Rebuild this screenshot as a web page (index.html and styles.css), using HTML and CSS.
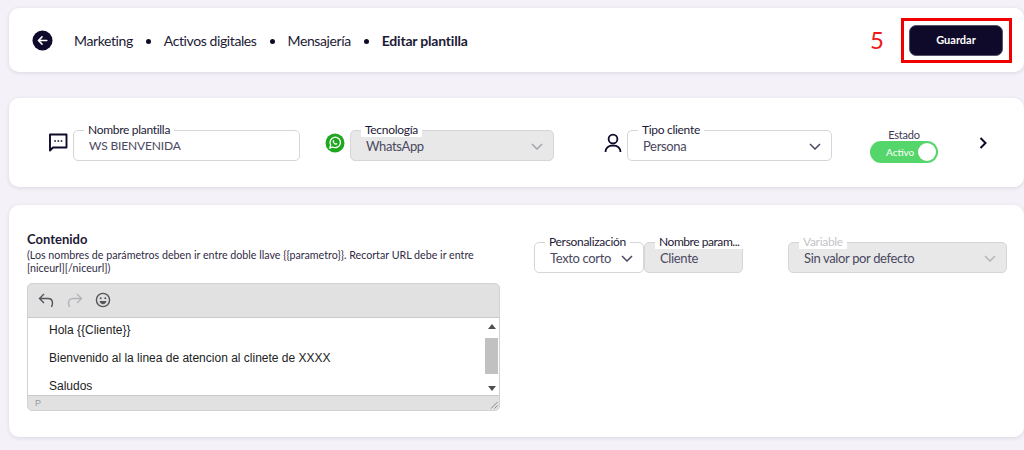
FILE: index.html
```html
<!DOCTYPE html>
<html lang="es">
<head>
<meta charset="utf-8">
<title>Editar plantilla</title>
<link rel="stylesheet" href="styles.css">
</head>
<body>
<main class="page">
  <header class="card topbar">
    <svg class="back" viewBox="0 0 22 22" width="21" height="21"><circle cx="11" cy="11" r="10.5" fill="#0f0a2a"/><path d="M15.5 11H7M10.5 7.2 6.700 11l3.800 3.800" fill="none" stroke="#fff" stroke-width="1.600" stroke-linecap="round" stroke-linejoin="round"/></svg>
    <nav class="crumbs">
      <span>Marketing</span><i></i><span>Activos digitales</span><i></i><span>Mensajería</span><i></i><strong>Editar plantilla</strong>
    </nav>
    <span class="step">5</span>
    <div class="mark"><button class="save">Guardar</button></div>
  </header>

  <section class="card meta">
    <svg class="ic-chat" viewBox="0 0 20 20" width="20" height="20"><path d="M2 2.500h16.500v13H5L2 18.500z" fill="none" stroke="#0f0a2a" stroke-width="1.900" stroke-linejoin="round"/><path d="M6.300 9h1.600M9.500 9h1.600M12.700 9h1.600" stroke="#0f0a2a" stroke-width="1.700"/></svg>
    <div class="field f-name"><span class="lab">Nombre plantilla</span><span class="val tight">WS BIENVENIDA</span></div>
    <svg class="ic-wa" viewBox="0 0 20 20" width="20" height="20"><circle cx="10" cy="10" r="9.500" fill="#1fa81f"/><path d="M4.800 15.200l.9-3.200a5.200 5.200 0 1 1 2 2z" fill="none" stroke="#fff" stroke-width="1.300" stroke-linejoin="round"/><path d="M8 7.300c-.7.800-.4 1.900.5 3s2 1.800 3 1.500c.7-.3.900-.9.700-1.200l-1.100-.6-.6.500c-.6-.2-1.200-.9-1.500-1.500l.4-.6-.5-1.100c-.3-.2-.6-.2-.9 0z" fill="#fff"/></svg>
    <div class="field f-tec off"><span class="lab">Tecnología</span><span class="val">WhatsApp</span><svg class="chev" viewBox="0 0 12 7" width="12" height="7"><path d="M1 1l5 5 5-5" fill="none" stroke="#a5a5ab" stroke-width="1.500"/></svg></div>
    <svg class="ic-user" viewBox="0 0 18 20" width="18" height="20"><circle cx="9" cy="6" r="4.400" fill="none" stroke="#0f0a2a" stroke-width="1.800"/><path d="M1.500 19c0-4 3-6.500 7.500-6.500s7.500 2.500 7.500 6.500" fill="none" stroke="#0f0a2a" stroke-width="1.800"/></svg>
    <div class="field f-tipo"><span class="lab">Tipo cliente</span><span class="val">Persona</span><svg class="chev" viewBox="0 0 12 7" width="12" height="7"><path d="M1 1l5 5 5-5" fill="none" stroke="#4b4860" stroke-width="1.500"/></svg></div>
    <div class="state">
      <span class="state-lab">Estado</span>
      <div class="toggle"><span>Activo</span><b></b></div>
    </div>
    <svg class="next" viewBox="0 0 8 12" width="8" height="12"><path d="M1.500 1l5 5-5 5" fill="none" stroke="#0f0a2a" stroke-width="2"/></svg>
  </section>

  <section class="card content">
    <div class="left">
      <h2>Contenido</h2>
      <p>(Los nombres de parámetros deben ir entre doble llave {{parametro}}. Recortar URL debe ir entre [niceurl][/niceurl])</p>
      <div class="editor">
        <div class="tools">
          <svg viewBox="0 0 18 18" width="18" height="18"><path d="M7 3 2.500 7.500 7 12M3 7.500h8c3 0 4.500 2 4.500 4.500 0 1.500-.5 3-1 4" fill="none" stroke="#55555a" stroke-width="1.400"/></svg>
          <svg viewBox="0 0 18 18" width="18" height="18"><path d="M11 3l4.500 4.500L11 12M15 7.500H7C4 7.500 2.500 9.500 2.500 12c0 1.500.5 3 1 4" fill="none" stroke="#b4b4b8" stroke-width="1.400"/></svg>
          <svg viewBox="0 0 18 18" width="18" height="18"><circle cx="9" cy="9" r="6.600" fill="none" stroke="#55555a" stroke-width="1.400"/><circle cx="6.700" cy="7.300" r="1" fill="#55555a"/><circle cx="11.300" cy="7.300" r="1" fill="#55555a"/><path d="M5.500 10h7c-.3 2-1.700 3.200-3.500 3.200S5.800 12 5.500 10z" fill="#55555a"/></svg>
        </div>
        <div class="body">
          <div class="text">
            <p>Hola {{Cliente}}</p>
            <p>Bienvenido al la linea de atencion al clinete de XXXX</p>
            <p>Saludos</p>
          </div>
          <div class="scroll">
            <svg viewBox="0 0 8 5" width="8" height="5"><path d="M0 5l4-5 4 5z" fill="#505050"/></svg>
            <div class="thumb"></div>
            <svg viewBox="0 0 8 5" width="8" height="5"><path d="M0 0l4 5 4-5z" fill="#505050"/></svg>
          </div>
        </div>
        <div class="status"><span>P</span><svg viewBox="0 0 8 8" width="8" height="8"><path d="M7.500 1 1 7.500M7.500 4.500 4.500 7.500" stroke="#8a8a8a" stroke-width="1"/></svg></div>
      </div>
    </div>
    <div class="params">
      <div class="field f-per"><span class="lab">Personalización</span><span class="val">Texto corto</span><svg class="chev" viewBox="0 0 12 7" width="12" height="7"><path d="M1 1l5 5 5-5" fill="none" stroke="#4b4860" stroke-width="1.500"/></svg></div>
      <div class="field f-par off"><span class="lab nar">Nombre param...</span><span class="val">Cliente</span></div>
      <div class="field f-var off"><span class="lab dim">Variable</span><span class="val">Sin valor por defecto</span><svg class="chev" viewBox="0 0 12 7" width="12" height="7"><path d="M1 1l5 5 5-5" fill="none" stroke="#b5b5ba" stroke-width="1.500"/></svg></div>
    </div>
  </section>
</main>
</body>
</html>
```

FILE: styles.css
```css
* { box-sizing: border-box; }
html, body { margin: 0; height: 450px; overflow: hidden; }
body { background: #f4f1f8; font-family: "Lato", "Open Sans", sans-serif; color: #0f0a2a; }
.page { display: flex; flex-direction: column; padding: 8px 0 0 9px; }
.card { background: #fff; border-radius: 10px; box-shadow: 0 1px 4px rgba(40, 30, 70, .12); }

.topbar { height: 64px; display: flex; align-items: center; padding: 0 12px 0 23px; margin-bottom: 26px; }
.back { flex: none; }
.crumbs { display: flex; align-items: center; margin-left: 21px; font-size: 14px; letter-spacing: -.4px; color: #1d1a36; }
.crumbs i { width: 5px; height: 5px; border-radius: 50%; background: #0f0a2a; margin: 2px 13px 0 13px; }
.crumbs strong { font-weight: 700; font-size: 14px; letter-spacing: -.2px; }
.step { margin-left: auto; color: #f01818; font-size: 24px; line-height: 1; margin-right: 17px; }
.mark { border: 3px solid #f00000; padding: 4px 5px; height: 45px; width: 111px; }
.save { display: block; width: 94px; height: 31px; border: 1px solid #57546c; border-radius: 7px; background: #0f0a2a; color: #fff; font: 700 11px "Lato", sans-serif; padding: 0 0 2px; }

.meta { height: 89px; display: flex; align-items: flex-start; padding: 32px 0 0 39px; margin-bottom: 18px; }
.field { position: relative; height: 31px; border: 1px solid #d6d6d9; border-radius: 5px; background: #fff; display: flex; align-items: center; font-size: 13px; letter-spacing: -.35px; color: #4b4860; flex: none; }
.field.off { background: #e8e8e9; }
.lab { position: absolute; top: -8px; left: 10px; padding: 0 4px; background: #fff; font-size: 12px; line-height: 14px; letter-spacing: -.3px; color: #1d1a36; white-space: nowrap; }
.lab.dim { color: #c4c4c8; }
.lab.nar { letter-spacing: -.45px; }
.val { padding-left: 15px; white-space: nowrap; }
.tight { font-size: 12px; letter-spacing: -.15px; }
.chev { position: absolute; right: 10px; top: 12px; }
.ic-chat { margin: 2px 5px 0 0; flex: none; }
.f-name { width: 227px; margin-right: 25px; }
.ic-wa { margin: 3px 5px 0 0; flex: none; }
.f-tec { width: 204px; margin-right: 50px; }
.ic-user { margin: 3px 5px 0 0; flex: none; }
.f-tipo { width: 205px; margin-right: 38px; }
.state { width: 68px; display: flex; flex-direction: column; align-items: center; }
.state-lab { font-size: 11px; line-height: 14px; letter-spacing: -.2px; color: #3d3a52; margin-top: -2px; margin-bottom: -1px; }
.toggle { width: 68px; height: 22px; border-radius: 11px; background: #55d66b; display: flex; align-items: center; justify-content: space-between; padding: 0 2px 0 16px; color: #fff; font-size: 10px; }
.toggle b { width: 18px; height: 18px; border-radius: 50%; background: #fff; }
.next { margin: 7px 0 0 41px; flex: none; }

.content { height: 232px; display: flex; align-items: flex-start; padding: 27px 0 0 18px; }
.left { width: 473px; flex: none; }
h2 { margin: 0; font-size: 13px; line-height: 14px; font-weight: 700; color: #1d1a36; }
.left > p { margin: 2px 0 9px; font-size: 10.7px; line-height: 13px; color: #2f2c45; }
.editor { height: 128px; border-radius: 5px; background: #e1e1e2; border: 1px solid #d2d2d4; display: flex; flex-direction: column; overflow: hidden; }
.tools { height: 33px; display: flex; align-items: center; gap: 10.5px; padding: 0 0 2px 9px; flex: none; }
.body { height: 79px; flex: none; background: #fff; border-top: 1px solid #c9c9cb; border-bottom: 1px solid #c9c9cb; display: flex; overflow: hidden; }
.text { flex: 1; padding-left: 21px; font: 12px/16px "Liberation Sans", sans-serif; color: #222; }
.text p { margin: 4px 0 12px; }
.scroll { width: 15px; flex: none; display: flex; flex-direction: column; align-items: center; padding-top: 6px; }
.thumb { width: 13px; height: 36px; background: #c1c1c1; margin: 9px 0 12px; }
.status { flex: 1; display: flex; align-items: center; justify-content: space-between; padding: 0 1px 0 7px; font: 9px "Liberation Sans", sans-serif; color: #9a9a9a; }
.status svg { align-self: flex-end; margin-bottom: 1px; }

.params { display: flex; align-items: flex-start; margin: 10px 0 0 34px; }
.f-per { width: 110px; }
.f-par { width: 99px; margin-right: 45px; }
.f-var { width: 219px; }
```
